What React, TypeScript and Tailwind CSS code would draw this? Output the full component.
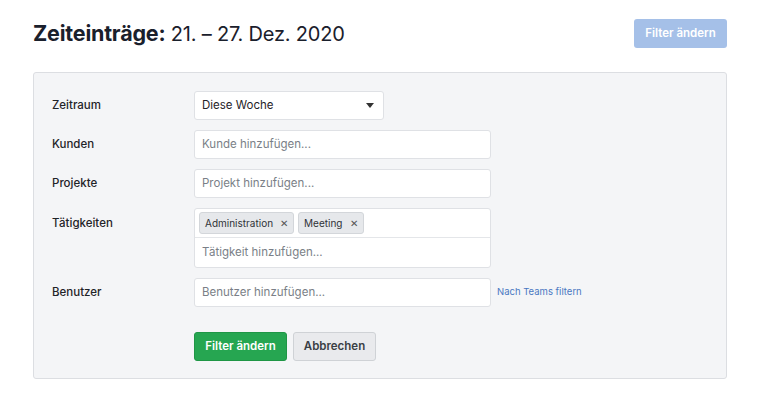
const Row = ({ label, children, top = false }: { label: string; children: React.ReactNode; top?: boolean }) => (
  <div className={`flex ${top ? 'items-start' : 'items-center'}`}>
    <div className={`w-[142px] shrink-0 text-[11.5px] font-medium text-[#1f2328] ${top ? 'pt-[7px]' : ''}`}>{label}</div>
    {children}
  </div>
);

const Input = ({ placeholder }: { placeholder: string }) => (
  <div className="w-[297px] h-[29px] bg-white border border-[#dfe1e5] rounded-[3px] flex items-center px-[7px] text-[11.5px] text-[#7a7f87]">
    {placeholder}
  </div>
);

const Tag = ({ name }: { name: string }) => (
  <div className="h-[22px] flex items-center gap-[7px] px-[5px] bg-[#e6e8eb] border border-[#d3d6da] rounded-[3px] text-[10px] text-[#2f3338]">
    <span>{name}</span>
    <span className="text-[10px] text-[#555]">✕</span>
  </div>
);

export default function App() {
  return (
    <div className="w-[768px] h-[405px] bg-white pl-[33px] pr-[41px] pt-[19px]" style={{ fontFamily: 'Inter, "Noto Sans", sans-serif' }}>
      <div className="flex items-center justify-between h-[29px]">
        <h1 className="text-[20px] text-[#1a202c] leading-[29px] tracking-[-0.2px]">
          <span className="font-bold text-[21.5px]">Zeiteinträge:</span> 21. – 27. Dez. 2020
        </h1>
        <button className="w-[93px] h-[29px] bg-[#a5c0e8] rounded-[3px] text-white text-[11.5px] font-semibold">
          Filter ändern
        </button>
      </div>

      <div className="mt-[24px] bg-[#f4f5f7] border border-[#dcdee2] rounded-[3px] pl-[18px] pt-[18px] pb-[17px] flex flex-col gap-[10px]">
        <Row label="Zeitraum">
          <div className="w-[190px] h-[29px] bg-white border border-[#dfe1e5] rounded-[3px] flex items-center justify-between pl-[7px] pr-[9px] text-[11.5px] text-[#1f2328]">
            <span>Diese Woche</span>
            <svg width="8" height="5" viewBox="0 0 8 5"><path d="M0 0h8L4 5z" fill="#333" /></svg>
          </div>
        </Row>
        <Row label="Kunden">
          <Input placeholder="Kunde hinzufügen..." />
        </Row>
        <Row label="Projekte">
          <Input placeholder="Projekt hinzufügen..." />
        </Row>
        <Row label="Tätigkeiten" top>
          <div className="w-[297px] bg-white border border-[#dfe1e5] rounded-[3px]">
            <div className="h-[29px] flex items-center gap-[4px] px-[4px] border-b border-[#e4e6e9]">
              <Tag name="Administration" />
              <Tag name="Meeting" />
            </div>
            <div className="h-[29px] flex items-center px-[7px] text-[11.5px] text-[#7a7f87]">Tätigkeit hinzufügen...</div>
          </div>
        </Row>
        <Row label="Benutzer">
          <Input placeholder="Benutzer hinzufügen..." />
          <span className="ml-[6px] text-[9.5px] text-[#4a78c2]">Nach Teams filtern</span>
        </Row>
        <div className="flex gap-[6px] pl-[142px] mt-[15px]">
          <button className="w-[93px] h-[29px] bg-[#26a651] border border-[#1f9646] rounded-[3px] text-white text-[11.5px] font-semibold">
            Filter ändern
          </button>
          <button className="w-[83px] h-[29px] bg-[#e9eaed] border border-[#cfd2d6] rounded-[3px] text-[#3a3f45] text-[11.5px] font-semibold">
            Abbrechen
          </button>
        </div>
      </div>
    </div>
  );
}
